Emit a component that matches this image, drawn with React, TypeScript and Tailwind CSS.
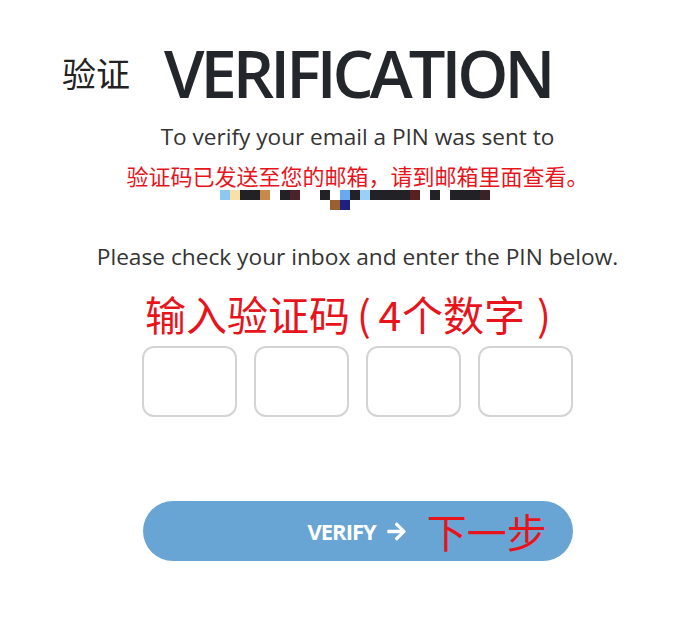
import React from "react";
import { FaArrowRight } from "react-icons/fa";

const LATIN = "font-['Open_Sans','Noto_Sans_CJK_SC',sans-serif]";
const CJK = "font-['Noto_Sans_CJK_SC',sans-serif]";

type Block = { w: number; c: string };
const row1: Block[] = [
  { w: 10, c: "#8ec8f0" },
  { w: 10, c: "#f8e0a8" },
  { w: 20, c: "#222226" },
  { w: 10, c: "#c88a48" },
  { w: 10, c: "transparent" },
  { w: 10, c: "#222226" },
  { w: 10, c: "#4a2228" },
  { w: 20, c: "transparent" },
  { w: 10, c: "#222226" },
  { w: 10, c: "transparent" },
  { w: 10, c: "#6aa8f0" },
  { w: 10, c: "#222226" },
  { w: 10, c: "#98d0f8" },
  { w: 40, c: "#222226" },
  { w: 10, c: "#5a2020" },
  { w: 10, c: "transparent" },
  { w: 10, c: "#222226" },
  { w: 10, c: "transparent" },
  { w: 30, c: "#222226" },
  { w: 10, c: "#3a2228" },
];

export default function App() {
  return (
    <div className={`w-[689px] h-[619px] bg-white ${LATIN} overflow-hidden`}>
      <div className="flex items-center pl-[62px] pt-[38px] h-[70px] box-content">
        <span className={`${CJK} text-[34px] leading-none text-[#222] font-normal`}>验证</span>
        <span className="ml-[34px] text-[65px] leading-none font-semibold text-[#23262b] tracking-[-4px]">
          VERIFICATION
        </span>
      </div>
      <div className="flex flex-col items-center pl-[26px]">
        <div className="mt-[14px] text-[22.6px] leading-[30px] text-[#333] whitespace-nowrap">
          To verify your email a PIN was sent to
        </div>
        <div className={`${CJK} mt-[8px] text-[22px] leading-[30px] text-[#e8141c] whitespace-nowrap`}>
          验证码已发送至您的邮箱，请到邮箱里面查看。
        </div>
        <div className="flex flex-col w-[270px] -ml-[5px]">
          <div className="flex h-[10px]">
            {row1.map((b, i) => (
              <div key={i} className="h-[10px]" style={{ width: b.w, background: b.c }} />
            ))}
          </div>
          <div className="flex h-[10px] pl-[110px]">
            <div className="w-[10px] h-[10px] bg-[#9a6030]" />
            <div className="w-[10px] h-[10px] bg-[#202080]" />
          </div>
        </div>
        <div className="mt-[32px] text-[22.7px] leading-[30px] text-[#333] whitespace-nowrap">
          Please check your inbox and enter the PIN below.
        </div>
        <div className={`${CJK} -ml-[7px] mt-[16px] text-[41px] leading-[50px] text-[#e8141c] whitespace-nowrap flex items-center`}>
          <span>输入验证码</span>
          <span className="w-[28px] text-center">(</span>
          <span className="w-[24px] text-center">4</span>
          <span>个数字</span>
          <span className="w-[38px] text-center">)</span>
        </div>
        <div className="mt-[8px] flex gap-[17px]">
          {[0, 1, 2, 3].map((i) => (
            <div key={i} className="w-[95px] h-[71px] rounded-[12px] border-2 border-[#d4d4d4] bg-white" />
          ))}
        </div>
        <div className="mt-[84px] w-[430px] h-[60px] rounded-full bg-[#69a5d4] flex items-center pl-[165px]">
          <span className="text-[22px] font-bold text-white tracking-[-1px] leading-none">VERIFY</span>
          <FaArrowRight className="ml-[10px] text-white text-[21px]" />
          <span className={`${CJK} ml-[20px] text-[40px] leading-none text-[#e8141c]`}>下一步</span>
        </div>
      </div>
    </div>
  );
}
